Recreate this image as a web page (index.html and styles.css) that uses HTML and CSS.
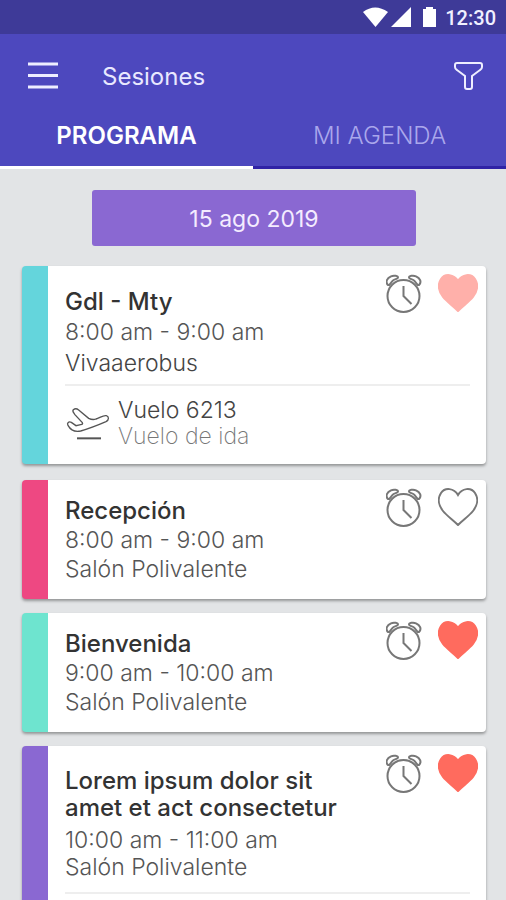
FILE: index.html
```html
<!DOCTYPE html>
<html lang="es">
<head>
    <meta charset="UTF-8">
    <meta name="viewport" content="width=device-width, initial-scale=1.0">
    <title>Sesiones</title>
    <link rel="stylesheet" href="styles.css">
</head>
<body>
    <!-- Shared icons -->
    <svg class="sprite" aria-hidden="true">
        <symbol id="icon-alarm" viewBox="0 0 36 40">
            <circle cx="17.5" cy="22" r="16"/>
            <path d="M17.5 12v10l8 8"/>
            <path d="M2 11C-1 8 1 4 5 2.300C8 1 12 2 12 3.500C12 5 9 5 7 6.500C5 8 4 12 2 11z"/>
            <path d="M33 11C36 8 34 4 30 2.300C27 1 23 2 23 3.500C23 5 26 5 28 6.500C30 8 31 12 33 11z"/>
        </symbol>
        <symbol id="icon-heart" viewBox="0 0 40 38">
            <path d="M20 7C16 0 7-1 3 5c-4 6-2 13 2 18 4 5 10 9 15 14 5-5 11-9 15-14 4-5 6-12 2-18-4-6-13-5-17 2z"/>
        </symbol>
    </svg>

    <div class="screen">
        <!-- Android status bar -->
        <div class="status-bar">
            <svg class="status-icons" viewBox="0 0 76 22" aria-hidden="true">
                <path d="M2 5q12-9 25 0L14.500 20z"/>
                <path d="M30 20L50 0v20z"/>
                <path d="M62 2h3V0h7v2h3v18H62z"/>
            </svg>
            <span class="status-time">12:30</span>
        </div>

        <header class="app-bar">
            <div class="toolbar">
                <button class="icon-button menu-button" type="button" aria-label="Menú">
                    <svg viewBox="0 0 30 28"><path d="M0 2h30M0 13.500h30M0 25h30"/></svg>
                </button>
                <h1 class="app-title">Sesiones</h1>
                <button class="icon-button filter-button" type="button" aria-label="Filtrar">
                    <svg viewBox="0 0 30 30"><path d="M4 2h23q2 0 2 2v2q0 2-2 3l-8 6v11q0 2-2 2h-3q-2 0-2-2V15L4 9Q2 8 2 6V4q0-2 2-2z"/></svg>
                </button>
            </div>
            <nav class="tabs">
                <button class="tab active" type="button">PROGRAMA</button>
                <button class="tab" type="button">MI AGENDA</button>
            </nav>
        </header>

        <main class="sessions">
            <button class="date-button" type="button">15 ago 2019</button>

            <article class="card card-flight cyan">
                <div class="card-top">
                    <div class="card-info">
                        <h2>Gdl - Mty</h2>
                        <p>8:00 am - 9:00 am</p>
                        <p class="place">Vivaaerobus</p>
                    </div>
                    <div class="card-actions">
                        <button class="icon-button alarm" type="button" aria-label="Recordatorio"><svg><use href="#icon-alarm"/></svg></button>
                        <button class="icon-button heart soft" type="button" aria-label="Favorito"><svg><use href="#icon-heart"/></svg></button>
                    </div>
                </div>
                <div class="card-extra">
                    <svg class="plane" viewBox="165 105 135 105" aria-hidden="true">
                        <path d="M190 116C186 120 190 124 194 130L217 155Q220 160 212 161L198 164L184 154C176 150 170 156 174 163C182 178 192 184 212 180C240 172 265 162 288 152C298 147 297 136 289 134C280 132 270 140 258 144C250 147 244 146 236 142L206 117C200 112 194 113 190 116Z"/>
                        <path class="runway" d="M201 202h72"/>
                    </svg>
                    <div>
                        <p class="flight">Vuelo 6213</p>
                        <p class="flight-type">Vuelo de ida</p>
                    </div>
                </div>
            </article>

            <article class="card pink">
                <div class="card-top">
                    <div class="card-info">
                        <h2>Recepción</h2>
                        <p>8:00 am - 9:00 am</p>
                        <p>Salón Polivalente</p>
                    </div>
                    <div class="card-actions">
                        <button class="icon-button alarm" type="button" aria-label="Recordatorio"><svg><use href="#icon-alarm"/></svg></button>
                        <button class="icon-button heart" type="button" aria-label="Favorito"><svg><use href="#icon-heart"/></svg></button>
                    </div>
                </div>
            </article>

            <article class="card mint">
                <div class="card-top">
                    <div class="card-info">
                        <h2>Bienvenida</h2>
                        <p>9:00 am - 10:00 am</p>
                        <p>Salón Polivalente</p>
                    </div>
                    <div class="card-actions">
                        <button class="icon-button alarm" type="button" aria-label="Recordatorio"><svg><use href="#icon-alarm"/></svg></button>
                        <button class="icon-button heart full" type="button" aria-label="Favorito"><svg><use href="#icon-heart"/></svg></button>
                    </div>
                </div>
            </article>

            <article class="card card-long purple">
                <div class="card-top">
                    <div class="card-info">
                        <h2>Lorem ipsum dolor sit<br>amet et act consectetur</h2>
                        <p>10:00 am - 11:00 am</p>
                        <p>Salón Polivalente</p>
                    </div>
                    <div class="card-actions">
                        <button class="icon-button alarm" type="button" aria-label="Recordatorio"><svg><use href="#icon-alarm"/></svg></button>
                        <button class="icon-button heart full" type="button" aria-label="Favorito"><svg><use href="#icon-heart"/></svg></button>
                    </div>
                </div>
                <div class="card-extra"></div>
            </article>
        </main>
    </div>
</body>
</html>
```
FILE: styles.css
```css
* {
    box-sizing: border-box;
}

body {
    margin: 0;
    font-family: Inter, "Open Sans", sans-serif;
    background-color: #e2e4e6;
    color: #555;
}

h1, h2, p {
    margin: 0;
}

button {
    font-family: inherit;
    border: none;
    padding: 0;
    background: none;
    cursor: pointer;
}

.sprite {
    display: none;
}

.screen {
    display: flex;
    flex-direction: column;
    height: 100vh;
}

/* Status bar */
.status-bar {
    display: flex;
    justify-content: flex-end;
    align-items: center;
    gap: 8px;
    height: 34px;
    padding: 2px 10px 0 0;
    background-color: #3e3a98;
    color: #f0f0ff;
    flex-shrink: 0;
}

.status-icons {
    width: 76px;
    height: 22px;
    fill: #fff;
}

.status-time {
    font-family: Roboto, sans-serif;
    font-size: 20px;
    font-weight: 500;
}

/* App bar */
.app-bar {
    background-color: #4d48be;
    flex-shrink: 0;
}

.toolbar {
    display: flex;
    align-items: center;
    height: 72px;
    padding: 12px 23px 0 28px;
}

.icon-button {
    display: block;
    flex-shrink: 0;
}

.icon-button svg {
    display: block;
    width: 100%;
    height: 100%;
    fill: none;
    overflow: visible;
}

.menu-button {
    width: 30px;
    height: 28px;
    stroke: #eeeeff;
    stroke-width: 3;
}

.filter-button {
    width: 30px;
    height: 30px;
    stroke: #eeeeff;
    stroke-width: 2;
}

.app-title {
    flex: 1;
    margin-left: 44px;
    font-size: 24px;
    font-weight: 400;
    color: #e9e8ff;
}

.tabs {
    display: flex;
}

.tab {
    flex: 1;
    height: 63px;
    padding-bottom: 2px;
    border-bottom: 3px solid #3023a6;
    font-size: 24px;
    font-weight: 300;
    color: #aaa7ec;
}

.tab.active {
    border-bottom-color: #fff;
    font-weight: 600;
    color: #fff;
}

/* Session list */
.sessions {
    flex: 1;
    min-height: 0;
    overflow-y: auto;
    scrollbar-width: none;
    padding: 21px 20px 0 22px;
}

.date-button {
    display: block;
    width: 70%;
    height: 56px;
    margin: 0 auto 20px;
    padding-top: 2px;
    border-radius: 3px;
    background-color: #8a68d2;
    color: #f4ecff;
    font-size: 23px;
}

.card {
    margin-bottom: 14px;
    border-left: 26px solid;
    border-radius: 4px;
    background-color: #fff;
    box-shadow: 0 2px 3px rgba(0, 0, 0, 0.35);
}

.cyan { border-color: #64d5dc; }
.pink { border-color: #ee4882; }
.mint { border-color: #6ee4cf; }
.purple { border-color: #8a68d2; }

.card-top {
    display: flex;
    padding-right: 8px;
}

.card-info {
    flex: 1;
    padding: 16px 0 15px 17px;
    font-size: 23px;
    font-weight: 300;
    line-height: 29px;
}

.card-info h2 {
    font-size: 24px;
    font-weight: 500;
    line-height: 30px;
    color: #333;
}

.card-actions {
    display: flex;
    gap: 16px;
    padding-top: 8px;
}

.alarm {
    width: 36px;
    height: 40px;
    stroke: #777;
    stroke-width: 2;
}

.heart {
    width: 40px;
    height: 38px;
    stroke: #777;
    stroke-width: 2;
}

.heart.soft {
    stroke: #ffb0aa;
}

.heart.soft svg {
    fill: #ffb0aa;
}

.heart.full {
    stroke: #ff6b5e;
}

.heart.full svg {
    fill: #ff6b5e;
}

.card-extra {
    display: flex;
    align-items: center;
    gap: 8px;
    margin: 0 16px 0 17px;
    padding: 11px 0 15px;
    border-top: 2px solid #eee;
    line-height: 26px;
}

.card-flight {
    margin-bottom: 16px;
}

.card-flight .card-info {
    padding: 21px 0 5px 17px;
    line-height: 31px;
}

.card-info .place {
    color: #444;
}

.plane {
    width: 45px;
    height: 35px;
    fill: none;
    stroke: #555;
    stroke-width: 4;
}

.runway {
    stroke-width: 6;
}

.flight {
    font-size: 23px;
    font-weight: 300;
    color: #444;
}

.flight-type {
    font-size: 23px;
    font-weight: 200;
    color: #777;
}

.card-long .card-info {
    padding: 21px 0 11px 17px;
    line-height: 27px;
}

.card-long .card-info h2 {
    margin-bottom: 6px;
    line-height: 27px;
}
```
